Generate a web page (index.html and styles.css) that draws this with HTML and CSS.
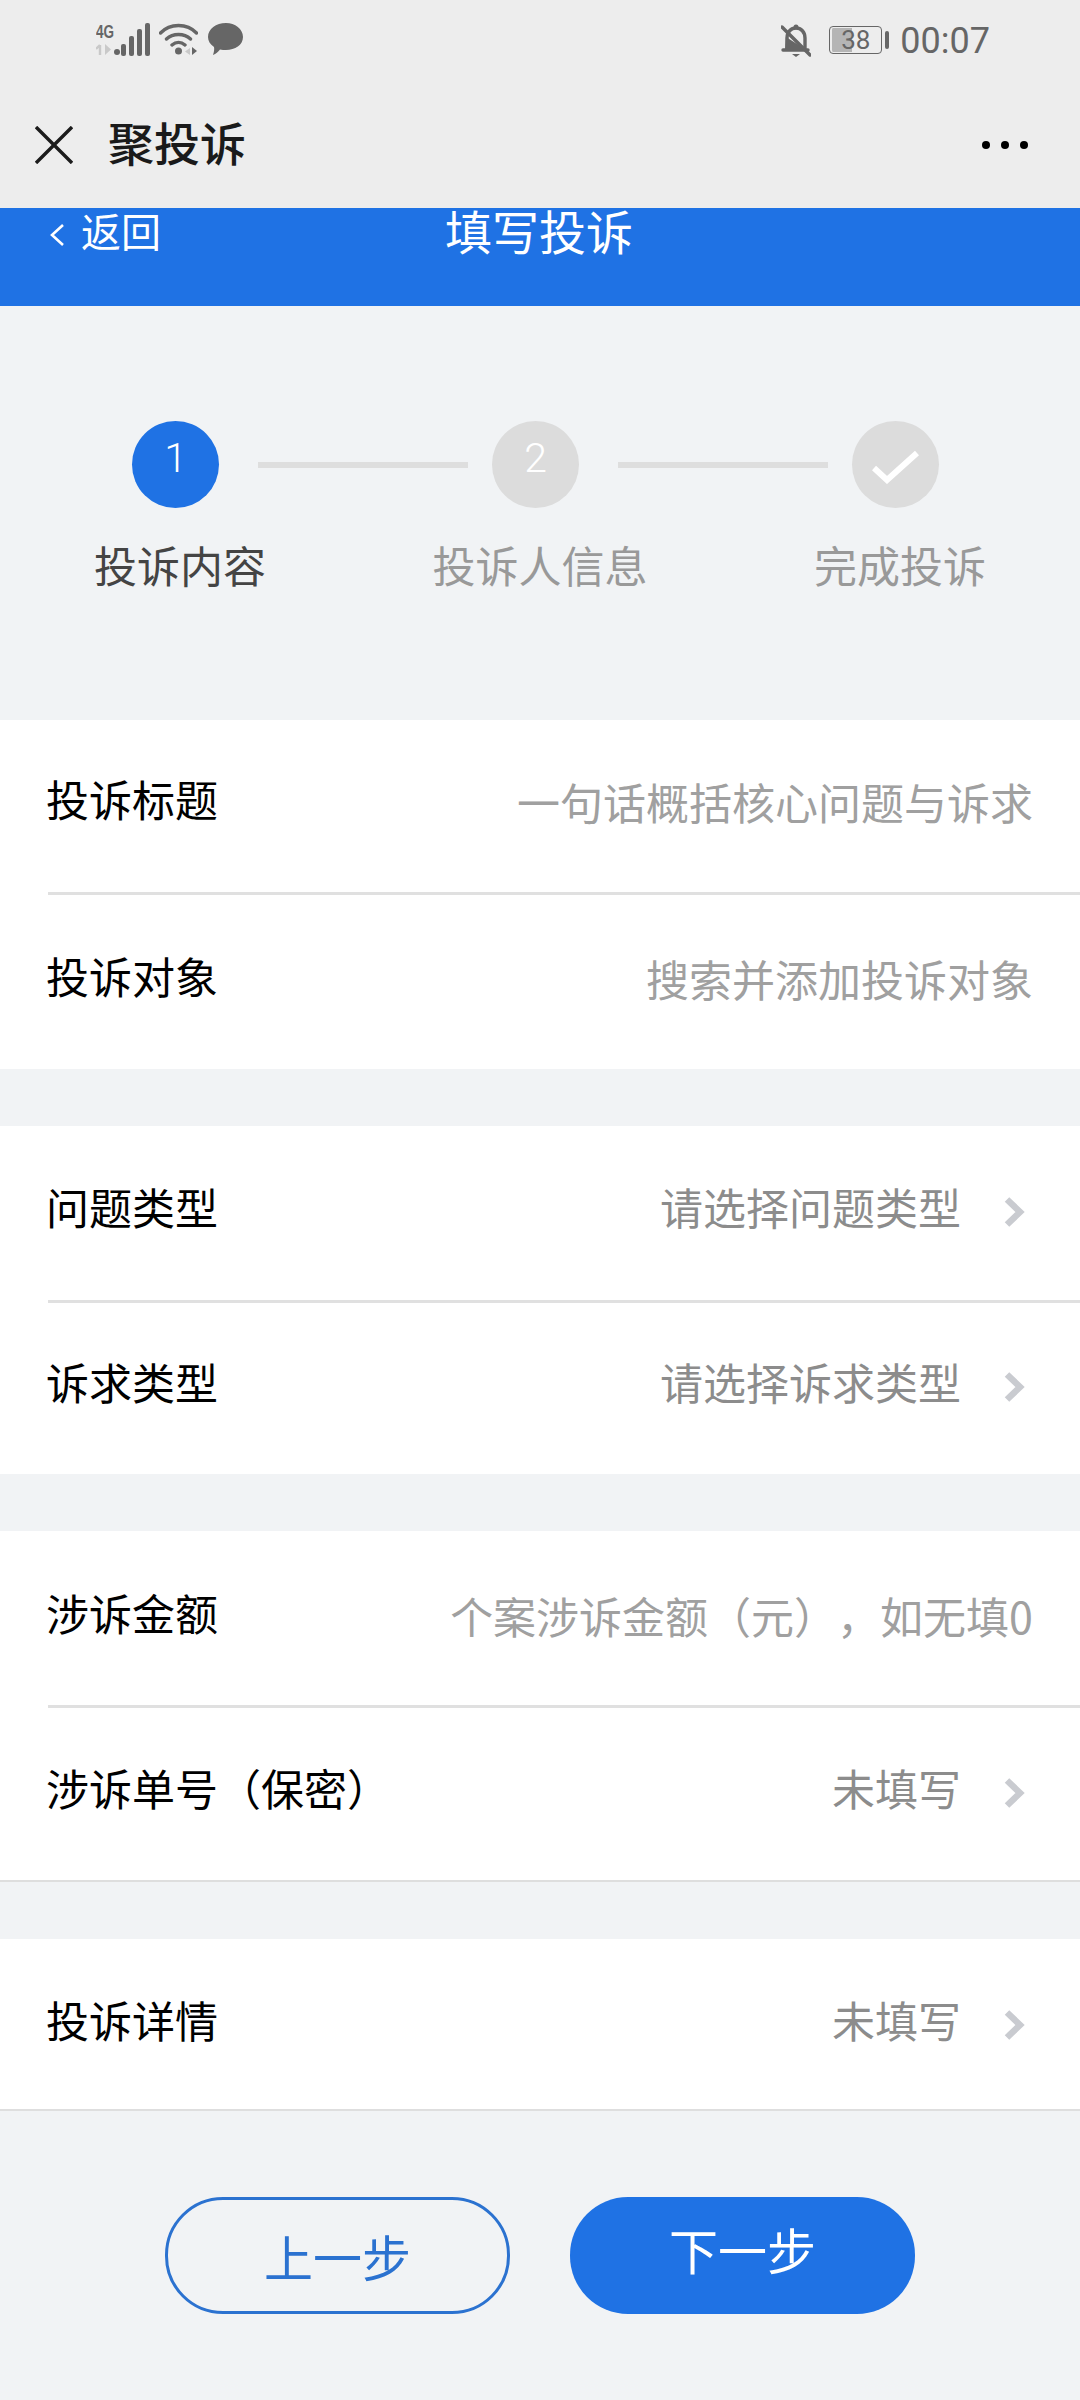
FILE: index.html
```html
<!DOCTYPE html>
<html lang="zh-CN">
<head>
    <meta charset="UTF-8">
    <meta name="viewport" content="width=device-width, initial-scale=1.0">
    <title>聚投诉</title>
    <link rel="stylesheet" href="styles.css">
</head>
<body>

    <!-- 状态栏和小程序标题 -->
    <header class="top">
        <div class="status">
            <div class="status-left">
                <svg class="ico-signal" width="56" height="33" viewBox="0 0 56 33">
                    <text x="0" y="15" class="net-text" textLength="18" lengthAdjust="spacingAndGlyphs">4G</text>
                    <path d="M4 22v10M0 26l4-4" fill="none" stroke="#c9c9c9" stroke-width="2.400"/>
                    <path d="M9 21v11l6-5.500z" fill="#c9c9c9"/>
                    <circle cx="21" cy="29" r="3" fill="#666"/>
                    <rect x="25" y="21" width="5" height="12" rx="2" fill="#666"/>
                    <rect x="33" y="13" width="5" height="20" rx="2" fill="#666"/>
                    <rect x="41" y="6" width="5" height="27" rx="2" fill="#666"/>
                    <rect x="49" y="0" width="5" height="33" rx="2" fill="#666"/>
                </svg>
                <svg class="ico-wifi" width="39" height="32" viewBox="0 0 39 32">
                    <path d="M1.500 10C11 0 28 0 37.500 10M7.500 16C14 10 25 10 31.500 16M13 22C17 18.500 22 18.500 26 22" stroke="#666" stroke-width="3.400" fill="none" stroke-linecap="round"/>
                    <circle cx="19.500" cy="28" r="3.500" fill="#666"/>
                    <path d="M33 24v8l5-4z" fill="#666"/>
                    <path d="M31 25v7l-5-3.500z" fill="#c9c9c9"/>
                </svg>
                <svg class="ico-chat" width="35" height="34" viewBox="0 0 35 34">
                    <path d="M18 1C27 1 35 7 35 15C35 23 27 28 18 28C16 28 14 28 12 27.500C10 30 8 32 5 33C6 30 6.500 27 6 25C2 22 0 19 0 15C0 7 8 1 18 1Z" fill="#666"/>
                </svg>
            </div>
            <div class="status-right">
                <svg class="ico-bell" width="30" height="33" viewBox="0 0 30 33">
                    <path d="M6 25V14C6 8 10 4 15 4C20 4 24 8 24 14V25M2 26H27" stroke="#666" stroke-width="3.400" fill="none" stroke-linecap="round"/>
                    <path d="M5 13L24 25V26H4Z" fill="#666"/>
                    <circle cx="15" cy="3" r="2.500" fill="#666"/>
                    <path d="M11 30H19L15 33Z" fill="#666"/>
                    <path d="M1 3L29 31" stroke="#666" stroke-width="3.400" stroke-linecap="round"/>
                </svg>
                <div class="battery">38</div>
                <span class="battery-nub"></span>
                <span class="clock">00:07</span>
            </div>
        </div>
        <div class="nav">
            <svg class="ico-close" width="38" height="38" viewBox="0 0 38 38">
                <path d="M1 1L37 37M37 1L1 37" stroke="#1c1c1c" stroke-width="3.400" fill="none"/>
            </svg>
            <span class="nav-title">聚投诉</span>
            <div class="dots"><i></i><i></i><i></i></div>
        </div>
    </header>

    <!-- 蓝色标题栏 -->
    <section class="banner">
        <div class="back">
            <svg width="14" height="22" viewBox="0 0 14 22">
                <path d="M13 1L2 11L13 21" stroke="#fff" stroke-width="2.600" fill="none"/>
            </svg>
            <span>返回</span>
        </div>
        <div class="banner-title">填写投诉</div>
    </section>

    <!-- 步骤 -->
    <section class="steps">
        <div class="track">
            <div class="circle on">1</div>
            <div class="line"></div>
            <div class="circle">2</div>
            <div class="line"></div>
            <div class="circle">
                <svg width="48" height="34" viewBox="0 0 48 34">
                    <path d="M2 18L15 30L45 3" stroke="#fff" stroke-width="6" fill="none"/>
                </svg>
            </div>
        </div>
        <div class="labels">
            <span class="active">投诉内容</span>
            <span>投诉人信息</span>
            <span>完成投诉</span>
        </div>
    </section>

    <!-- 表单 -->
    <section class="group">
        <div class="row r-title"><span class="name">投诉标题</span><span class="hint">一句话概括核心问题与诉求</span></div>
        <div class="row r-target"><span class="name">投诉对象</span><span class="hint">搜索并添加投诉对象</span></div>
    </section>

    <section class="group">
        <div class="row r-type"><span class="name">问题类型</span><span class="value">请选择问题类型</span>
            <svg class="arrow" width="22" height="30" viewBox="0 0 22 30"><path d="M3 2.500L16 15L3 27.500" stroke="#c9cbd0" stroke-width="6.500" fill="none"/></svg>
        </div>
        <div class="row r-claim"><span class="name">诉求类型</span><span class="value">请选择诉求类型</span>
            <svg class="arrow" width="22" height="30" viewBox="0 0 22 30"><path d="M3 2.500L16 15L3 27.500" stroke="#c9cbd0" stroke-width="6.500" fill="none"/></svg>
        </div>
    </section>

    <section class="group closed">
        <div class="row r-amount"><span class="name">涉诉金额</span><span class="hint">个案涉诉金额（元），如无填0</span></div>
        <div class="row r-order"><span class="name">涉诉单号（保密）</span><span class="value">未填写</span>
            <svg class="arrow" width="22" height="30" viewBox="0 0 22 30"><path d="M3 2.500L16 15L3 27.500" stroke="#c9cbd0" stroke-width="6.500" fill="none"/></svg>
        </div>
    </section>

    <section class="group closed last">
        <div class="row r-detail"><span class="name">投诉详情</span><span class="value">未填写</span>
            <svg class="arrow" width="22" height="30" viewBox="0 0 22 30"><path d="M3 2.500L16 15L3 27.500" stroke="#c9cbd0" stroke-width="6.500" fill="none"/></svg>
        </div>
    </section>

    <div class="actions">
        <button type="button" class="btn prev">上一步</button>
        <button type="button" class="btn next">下一步</button>
    </div>

</body>
</html>
```

FILE: styles.css
```css
/* 基本样式 */
body {
    font-family: "Noto Sans CJK SC", "Noto Sans", sans-serif;
    text-spacing-trim: space-all;
    background-color: #f1f3f5;
    margin: 0;
    padding: 0;
    height: 2400px;
    overflow: hidden;
}

/* 顶部 */
.top {
    background-color: #ededed;
    height: 208px;
}
.status {
    height: 80px;
    padding: 0 90px 0 96px;
    display: flex;
    justify-content: space-between;
    align-items: center;
}
.status-left, .status-right {
    display: flex;
    align-items: center;
}
.status-left {
    margin-top: -2px;
}
.ico-wifi {
    margin-left: 7px;
}
.ico-chat {
    margin-left: 10px;
}
.net-text {
    font-family: "Liberation Sans", sans-serif;
    font-size: 18px;
    font-weight: 700;
    fill: #666;
}
.battery {
    width: 47px;
    height: 24px;
    margin-left: 18px;
    padding: 1px 2px;
    border: 1px solid #666;
    border-radius: 4px;
    background: linear-gradient(90deg, #b5b5b5 0 42%, transparent 42%) content-box;
    color: #666;
    font-family: Roboto, sans-serif;
    font-size: 26px;
    line-height: 24px;
    text-align: center;
}
.battery-nub {
    width: 4px;
    height: 18px;
    margin-left: 3px;
    background-color: #666;
    border-radius: 2px;
}
.clock {
    margin: 2px 0 0 11px;
    color: #666;
    font-family: Roboto, sans-serif;
    font-size: 36px;
    line-height: 40px;
}
.nav {
    display: flex;
    align-items: center;
    height: 130px;
    padding: 0 52px 0 35px;
}
.nav-title {
    margin: -8px 0 0 35px;
    color: #1a1a1a;
    font-size: 46px;
    font-weight: 500;
    line-height: 1;
}
.dots {
    margin-left: auto;
    display: flex;
    gap: 11px;
}
.dots i {
    width: 8px;
    height: 8px;
    background-color: #000;
    border-radius: 50%;
}

/* 蓝色标题栏 */
.banner {
    background-color: #1f72e4;
    color: #fff;
    height: 98px;
    padding-left: 50px;
    display: flex;
}
.back {
    width: 395px;
    height: 44px;
    display: flex;
    align-items: center;
    gap: 17px;
    font-size: 40px;
    line-height: 44px;
}
.back svg {
    margin-top: 9px;
}
.banner-title {
    font-size: 47px;
    line-height: 44px;
}

/* 步骤 */
.steps {
    height: 414px;
    padding-top: 115px;
    box-sizing: border-box;
}
.track {
    display: flex;
    align-items: center;
    padding-left: 132px;
}
.circle {
    width: 87px;
    height: 87px;
    padding-bottom: 14px;
    box-sizing: border-box;
    background-color: #dcdcdc;
    border-radius: 50%;
    color: #fff;
    font-family: Roboto, sans-serif;
    font-size: 41px;
    font-weight: 300;
    display: flex;
    align-items: center;
    justify-content: center;
}
.circle.on {
    background-color: #1f72e4;
}
.circle svg {
    margin-top: 18px;
}
.line {
    width: 210px;
    height: 6px;
    margin: 0 24px 0 39px;
    background-color: #dedede;
}
.labels {
    display: grid;
    grid-template-columns: 1fr 1fr 1fr;
    margin-top: 34px;
    color: #999;
    font-size: 43px;
    line-height: 44px;
    text-align: center;
}
.labels .active {
    color: #444;
}

/* 表单 */
.group {
    background-color: #fff;
    margin-bottom: 57px;
}
.row {
    display: flex;
    align-items: center;
    margin-left: 48px;
    padding-right: 47px;
    box-sizing: border-box;
    border-bottom: 3px solid #e0e0e0;
    font-size: 43px;
    line-height: 44px;
}
.group .row:last-child {
    border-bottom: none;
}

/* 每一行的高度不完全一样 */
.r-title { height: 175px; padding-bottom: 16px; }
.r-target { height: 174px; padding-bottom: 14px; }
.r-type { height: 177px; padding-bottom: 14px; }
.r-claim { height: 171px; padding-bottom: 15px; }
.r-amount { height: 177px; padding-bottom: 12px; }
.r-order { height: 172px; padding-bottom: 14px; }
.r-detail { height: 170px; padding-bottom: 10px; }

.name {
    margin-left: -2px;
    color: #000;
}
.hint {
    margin-left: auto;
    margin-top: 6px;
    color: #a0a0a0;
}
.value {
    margin-left: auto;
    color: #8c8c8c;
}
.arrow {
    margin: 12px 7px 0 43px;
}
.group.closed {
    border-bottom: 2px solid #dedede;
}
.group.last {
    margin-bottom: 0;
}

/* 按钮 */
.actions {
    display: flex;
    gap: 60px;
    padding: 86px 0 0 165px;
}
.btn {
    width: 345px;
    height: 117px;
    border-radius: 58px;
    box-sizing: border-box;
    font-family: inherit;
    font-size: 49px;
    padding: 0;
}
.btn.prev {
    background-color: transparent;
    border: 3px solid #2b72d0;
    color: #2b72d0;
}
.btn.next {
    background-color: #1f72e4;
    border: none;
    color: #fff;
    padding-bottom: 15px;
}
```
